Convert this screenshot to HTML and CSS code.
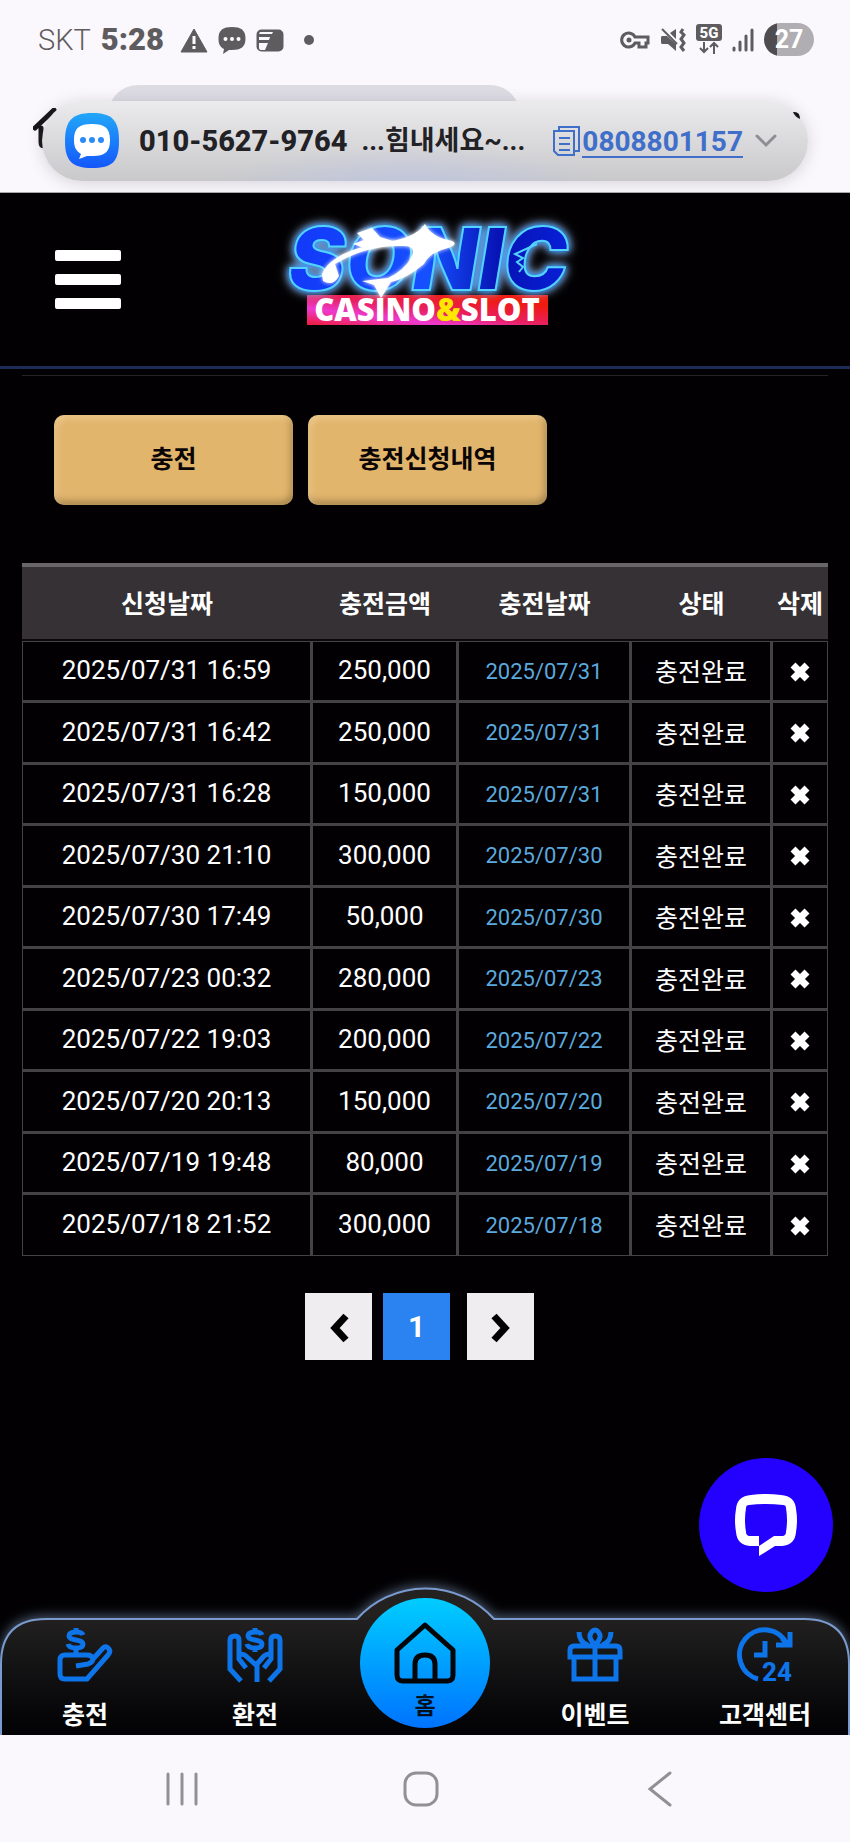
FILE: index.html
```html
<!DOCTYPE html>
<html lang="ko">
  <head>
    <meta charset="UTF-8" />
    <meta name="viewport" content="width=device-width, initial-scale=1.0" />
    <title>충전신청내역</title>
    <link rel="stylesheet" href="styles.css">
  </head>
  <body>
    <div class="phone-top">
      <div class="status-bar">
        <div class="status-left">
          <span class="carrier">SKT</span>
          <span class="clock">5:28</span>
          <svg width="28" height="28" viewBox="0 0 28 28"><path d="M14 3 L27 26 H1 Z" fill="#5f5c60" stroke="#5f5c60" stroke-linejoin="round"/><path d="M14 10v8M14 20v3" stroke="#fff" stroke-width="3"/></svg>
          <svg width="28" height="28" viewBox="0 0 28 28"><path d="M14 1C23 1 27.500 4 27.500 12.500S23 24 14 24H11L5 28L6 23C2 21 .5 18 .5 12.500C.5 4 5 1 14 1Z" fill="#5f5c60"/><g fill="#fff"><circle cx="7.500" cy="13" r="2"/><circle cx="14" cy="13" r="2"/><circle cx="20.500" cy="13" r="2"/></g></svg>
          <svg width="28" height="28" viewBox="0 0 28 28"><rect x="1.500" y="4.500" width="25" height="20" rx="4" fill="#5f5c60" stroke="#5f5c60" stroke-width="2"/><path d="M4 6H17L16 8H3ZM3 11H14L13 14H3ZM3 17H12L9 24H5Q3 24 3 22Z" fill="#faf8fc"/></svg>
          <span class="dot"></span>
        </div>
        <div class="status-right">
          <svg width="30" height="22" viewBox="0 0 30 22"><path d="M15 8A7 7 0 1 0 15 14H19V18H26V14H28V8Z" fill="none" stroke="#5f5c60" stroke-width="3"/><circle cx="9" cy="11" r="2.500" fill="#5f5c60"/></svg>
          <svg width="26" height="26" viewBox="0 0 26 26"><path d="M2 9H7L16 17V24L8 17H2Q1 17 1 15V11Q1 9 2 9ZM10 6L16 2V12Z" fill="#5f5c60"/><path d="M2 2L17 17" stroke="#5f5c60" stroke-width="2"/><path d="M23 2l-2 3 3 3-3 4 3 4-3 4 3 4" fill="none" stroke="#5f5c60" stroke-width="3"/></svg>
          <svg width="26" height="32" viewBox="0 0 26 32"><rect width="26" height="17" rx="3" fill="#5f5c60"/><text x="13" y="14" class="net-text" text-anchor="middle">5G</text><path d="M8 18V28M4 24L8 28L12 24M18 30V19M14 23L18 19L22 23" fill="none" stroke="#5f5c60" stroke-width="2"/></svg>
          <svg width="22" height="24" viewBox="0 0 22 24"><path d="M2 20V22M8 14V22M14 8V22M20 2V22" stroke="#5f5c60" stroke-width="3" stroke-linecap="round"/></svg>
          <span class="battery">27</span>
        </div>
      </div>

      <div class="notice-wrap">
        <svg class="under-icon" width="24" height="42" viewBox="0 0 24 42"><path d="M2 20L21 2M8 20V34Q8 38 11 38" fill="none" stroke="#161418" stroke-width="5" stroke-linecap="round"/></svg>
        <div class="notice-back"></div>
        <div class="notice">
          <svg width="56" height="56" viewBox="0 0 56 56">
            <defs><linearGradient id="msg" x1="0" y1="0" x2="0" y2="1"><stop offset="0" stop-color="#22a7f8"/><stop offset="1" stop-color="#1457fb"/></linearGradient></defs>
            <path d="M28 0C48 0 55 7 55 28S48 55 28 55S1 48 1 28S8 0 28 0Z" fill="url(#msg)"/>
            <path d="M28 11C41 11 46 15 46 27S41 43 29 43H23L15 46L17 41C12 38 10 34 10 27C10 15 15 11 28 11Z" fill="#fff"/>
            <g fill="#2b8af6"><circle cx="19" cy="27" r="3"/><circle cx="28" cy="27" r="3"/><circle cx="37" cy="27" r="3"/></g>
          </svg>
          <strong class="notice-from">010-5627-9764</strong>
          <span class="notice-text">...힘내세요~...</span>
          <a class="notice-link" href="tel:0808801157">
            <svg width="27" height="30" viewBox="0 0 27 30"><path d="M6 5V1H26V25H22M1 5H21V29H5L1 25ZM6 12H17M6 18H17M6 24H17" fill="none" stroke="#3f6fc9" stroke-width="2"/></svg><span>0808801157</span>
          </a>
          <svg width="22" height="14" viewBox="0 0 22 14"><path d="M2 2L11 11L20 2" fill="none" stroke="#8f8d92" stroke-width="3" stroke-linecap="round"/></svg>
        </div>
        <svg class="under-dot" width="10" height="9" viewBox="0 0 10 9"><path d="M1 1Q8 0 8 8Q3 6 1 1Z" fill="#161418"/></svg>
      </div>
    </div>

    <header class="header">
      <button class="menu-btn" type="button" aria-label="메뉴"><span></span><span></span><span></span></button>
      <a class="logo" href="#">
        <svg class="logo-svg" width="300" height="140" viewBox="0 0 300 140">
          <defs>
            <linearGradient id="bar" x1="0" y1="1" x2="1" y2="0"><stop offset="0" stop-color="#ee1c38"/><stop offset=".28" stop-color="#ee3ad0"/><stop offset=".5" stop-color="#e82060"/><stop offset=".8" stop-color="#ee1a12"/><stop offset="1" stop-color="#f01808"/></linearGradient>
            <linearGradient id="sonic" x1="0" y1="0" x2="1" y2="0"><stop offset="0" stop-color="#1238f8"/><stop offset=".5" stop-color="#1650ff"/><stop offset=".75" stop-color="#0713b4"/><stop offset="1" stop-color="#0820d8"/></linearGradient>
          </defs>
          <rect x="32" y="85" width="241" height="30" fill="url(#bar)"/>
          <text class="logo-main" x="153" y="80" text-anchor="middle">SONIC</text>
          <path class="logo-swoosh" d="M47 64Q56 42 105 33Q140 29 150 14Q156 27 177 31Q184 34 173 38Q155 42 149 54Q131 69 116 72L106 88L99 75L87 71L113 68Q130 60 137 46Q142 35 126 36Q92 35 60 54L64 66Q58 77 48 71Z"/>
          <path class="logo-swoosh" d="M82 23L97 18L105 27L124 33L92 39L78 34L89 30Z"/>
          <path d="M262 34L240 44L248 48L242 52L248 57L244 62" fill="none" stroke="#52d2ff" stroke-width="2"/>
          <text class="logo-sub" x="152" y="111" text-anchor="middle">CASINO<tspan fill="#ffe600">&amp;</tspan>SLOT</text>
        </svg>
      </a>
    </header>

    <main class="content">
      <hr class="line" />
      <div class="tabs">
        <button type="button" class="tab">충전</button>
        <button type="button" class="tab">충전신청내역</button>
      </div>

      <table class="history">
        <colgroup>
          <col class="c-req" /><col class="c-amt" /><col class="c-date" /><col class="c-state" /><col class="c-del" />
        </colgroup>
        <thead>
          <tr><th>신청날짜</th><th>충전금액</th><th>충전날짜</th><th>상태</th><th>삭제</th></tr>
        </thead>
        <tbody>
          <tr>
            <td class="num">2025/07/31 16:59</td><td class="num">250,000</td><td class="done">2025/07/31</td><td>충전완료</td>
            <td><button type="button" class="del-btn" aria-label="삭제"><svg width="20" height="20"><use href="#x" /></svg></button></td>
          </tr>
          <tr>
            <td class="num">2025/07/31 16:42</td><td class="num">250,000</td><td class="done">2025/07/31</td><td>충전완료</td>
            <td><button type="button" class="del-btn" aria-label="삭제"><svg width="20" height="20"><use href="#x" /></svg></button></td>
          </tr>
          <tr>
            <td class="num">2025/07/31 16:28</td><td class="num">150,000</td><td class="done">2025/07/31</td><td>충전완료</td>
            <td><button type="button" class="del-btn" aria-label="삭제"><svg width="20" height="20"><use href="#x" /></svg></button></td>
          </tr>
          <tr>
            <td class="num">2025/07/30 21:10</td><td class="num">300,000</td><td class="done">2025/07/30</td><td>충전완료</td>
            <td><button type="button" class="del-btn" aria-label="삭제"><svg width="20" height="20"><use href="#x" /></svg></button></td>
          </tr>
          <tr>
            <td class="num">2025/07/30 17:49</td><td class="num">50,000</td><td class="done">2025/07/30</td><td>충전완료</td>
            <td><button type="button" class="del-btn" aria-label="삭제"><svg width="20" height="20"><use href="#x" /></svg></button></td>
          </tr>
          <tr>
            <td class="num">2025/07/23 00:32</td><td class="num">280,000</td><td class="done">2025/07/23</td><td>충전완료</td>
            <td><button type="button" class="del-btn" aria-label="삭제"><svg width="20" height="20"><use href="#x" /></svg></button></td>
          </tr>
          <tr>
            <td class="num">2025/07/22 19:03</td><td class="num">200,000</td><td class="done">2025/07/22</td><td>충전완료</td>
            <td><button type="button" class="del-btn" aria-label="삭제"><svg width="20" height="20"><use href="#x" /></svg></button></td>
          </tr>
          <tr>
            <td class="num">2025/07/20 20:13</td><td class="num">150,000</td><td class="done">2025/07/20</td><td>충전완료</td>
            <td><button type="button" class="del-btn" aria-label="삭제"><svg width="20" height="20"><use href="#x" /></svg></button></td>
          </tr>
          <tr>
            <td class="num">2025/07/19 19:48</td><td class="num">80,000</td><td class="done">2025/07/19</td><td>충전완료</td>
            <td><button type="button" class="del-btn" aria-label="삭제"><svg width="20" height="20"><use href="#x" /></svg></button></td>
          </tr>
          <tr>
            <td class="num">2025/07/18 21:52</td><td class="num">300,000</td><td class="done">2025/07/18</td><td>충전완료</td>
            <td><button type="button" class="del-btn" aria-label="삭제"><svg width="20" height="20"><use href="#x" /></svg></button></td>
          </tr>
        </tbody>
      </table>

      <div class="paging">
        <button type="button" class="page-btn" aria-label="이전"><svg width="20" height="32" viewBox="0 0 20 32"><path d="M17 5L6 17L17 29" fill="none" stroke="#000" stroke-width="7"/></svg></button>
        <button type="button" class="page-btn current">1</button>
        <button type="button" class="page-btn next" aria-label="다음"><svg width="20" height="32" viewBox="0 0 20 32"><path d="M3 5L14 17L3 29" fill="none" stroke="#000" stroke-width="7"/></svg></button>
      </div>

      <button type="button" class="chat-btn" aria-label="채팅">
        <svg width="64" height="64" viewBox="0 0 64 64"><path fill-rule="evenodd" d="M17 2Q32 0 47 2Q61 3 62 16Q64 27 62 39Q61 52 48 53H41L25 63V53H16Q3 52 2 39Q0 27 2 16Q3 3 17 2ZM15 12Q12 12 12 15Q10 27 12 39Q12 42 15 43H25V53L40 43H49Q52 42 52 39Q54 27 52 15Q52 12 49 12Q32 10 15 12Z" fill="#fff"/></svg>
      </button>
    </main>

    <nav class="bottom-nav">
      <svg class="nav-bg" viewBox="0 0 850 166" preserveAspectRatio="none">
        <defs><linearGradient id="navfill" x1="0" y1="0" x2="0" y2="1"><stop offset=".15" stop-color="#242221"/><stop offset=".4" stop-color="#191819"/><stop offset=".9" stop-color="#040305"/></linearGradient></defs>
        <path class="nav-shape" d="M1 170V95Q1 50 46 50H357A92 92 0 0 1 494 50H804Q849 50 849 95V170Z" fill="url(#navfill)"/>
      </svg>
      <a href="#" class="nav-item">
        <svg width="54" height="54" viewBox="0 0 54 54"><path d="M18 38L30 36Q35 34 35 31L45 20Q48 17 51 21Q53 24 50 27L29 51H7Q2 51 2 46V32Q2 27 7 27H29Q34 27 35 31M18 20V27M25 7Q24 4 18 4Q11 4 11 8Q11 11 18 12Q25 13 25 16Q25 20 18 20Q11 20 10 16M18 0V4"/></svg>
        <span>충전</span>
      </a>
      <a href="#" class="nav-item">
        <svg width="54" height="54" viewBox="0 0 54 54"><path d="M13 53L2 41V12Q2 8 7 8Q11 8 11 12V31L18 40M11 27Q15 25 18 28L29 38V54M41 53L52 41V12Q52 8 47 8Q43 8 43 12V31L36 40M43 27Q39 25 36 28L29 36M34 7Q33 4 27 4Q20 4 20 8Q20 11 27 12Q34 13 34 16Q34 20 27 20Q20 20 19 16M27 0V4M27 20V24"/></svg>
        <span>환전</span>
      </a>
      <a href="#" class="nav-item home">
        <svg width="62" height="62" viewBox="0 0 62 62"><path d="M3 28L31 3L59 28V53Q59 59 53 59H9Q3 59 3 53ZM21 59V42Q21 33 31 33Q41 33 41 42V59"/></svg>
        <span>홈</span>
      </a>
      <a href="#" class="nav-item">
        <svg width="54" height="54" viewBox="0 0 54 54"><path d="M6 18H48Q52 18 52 22V29H2V22Q2 18 6 18ZM6 29V51H48V29M27 17V51M27 17Q21 11 22 7Q24 2 27 2Q30 2 32 7Q33 11 27 17ZM11 4Q11 14 20 17M43 4Q43 14 34 17"/></svg>
        <span>이벤트</span>
      </a>
      <a href="#" class="nav-item">
        <svg width="54" height="54" viewBox="0 0 54 54"><path d="M20 51A25 25 0 1 1 49 16M52 4V17H38M27 13V27H16M50 17L44 10"/><text x="39" y="53" text-anchor="middle" class="nav-24">24</text></svg>
        <span>고객센터</span>
      </a>
    </nav>

    <div class="system-nav">
      <button type="button" aria-label="최근 앱"><svg width="36" height="36" viewBox="0 0 36 36"><path d="M4 3V33M18 3V33M32 3V33"/></svg></button>
      <button type="button" aria-label="홈 화면"><svg width="36" height="36" viewBox="0 0 36 36"><rect x="2" y="2" width="32" height="32" rx="11"/></svg></button>
      <button type="button" aria-label="뒤로"><svg width="36" height="36" viewBox="0 0 36 36"><path d="M28 2L8 18L28 34"/></svg></button>
    </div>

    <!-- shared delete icon -->
    <svg class="sprite" width="0" height="0">
      <symbol id="x" viewBox="0 0 20 20"><path d="M3 3L17 17M17 3L3 17" stroke="#fff" stroke-width="7"/></symbol>
    </svg>
  </body>
</html>
```

FILE: styles.css
```css
* {
  box-sizing: border-box;
}
body {
  margin: 0;
  min-height: 100vh;
  display: flex;
  flex-direction: column;
  background: #020003;
  color: #fff;
  font-family: Roboto, "Noto Sans CJK KR", sans-serif;
}
button {
  border: 0;
  padding: 0;
  font-family: inherit;
  cursor: pointer;
}
a {
  color: inherit;
  text-decoration: none;
}
svg {
  flex: none;
  display: block;
}
.sprite {
  position: absolute;
}

/* phone status area */
.phone-top {
  height: 193px;
  background: #faf8fc;
  border-bottom: 1px solid #a9a7ab;
  overflow: hidden;
}
.status-bar {
  height: 77px;
  padding: 2px 36px 0 38px;
  display: flex;
  justify-content: space-between;
  align-items: center;
}
.status-left,
.status-right {
  display: flex;
  align-items: center;
  gap: 10px;
}
.carrier {
  font-size: 29px;
  font-weight: 300;
  color: #5f5c60;
}
.clock {
  font-size: 31px;
  font-weight: 900;
  color: #5f5c60;
  margin-right: 6px;
}
.dot {
  width: 10px;
  height: 10px;
  margin-left: 10px;
  border-radius: 50%;
  background: #5f5c60;
}
.net-text {
  font-size: 15px;
  font-weight: 800;
  fill: #fff;
}
.battery {
  width: 50px;
  height: 33px;
  border-radius: 17px;
  background: linear-gradient(to right, #4f4c50 26%, #b0aeb2 26%);
  font-size: 25px;
  font-weight: 700;
  line-height: 34px;
  text-align: center;
}
.notice-wrap {
  position: relative;
  padding: 24px 42px 0;
}
.under-icon {
  position: absolute;
  left: 33px;
  top: 31px;
}
.under-dot {
  position: absolute;
  right: 48px;
  top: 34px;
}
.notice-back {
  position: absolute;
  left: 108px;
  right: 330px;
  top: 8px;
  height: 60px;
  border-radius: 40px;
  background: #dddce3;
}
.notice {
  position: relative;
  height: 80px;
  padding: 0 31px 0 22px;
  display: flex;
  align-items: center;
  border-radius: 40px;
  background: radial-gradient(ellipse at 48% 110%, rgba(185, 195, 230, 0.7), rgba(185, 195, 230, 0) 35%),
    linear-gradient(#ebeaed, #c9c9cb);
  box-shadow: 0 2px 16px rgba(80, 75, 95, 0.22);
}
.notice-from {
  margin-left: 19px;
  font-size: 29px;
  font-weight: 800;
  color: #222126;
}
.notice-text {
  margin-left: 14px;
  font-size: 27px;
  font-weight: 700;
  line-height: 34px;
  color: #222126;
}
.notice-link {
  margin-left: auto;
  margin-right: 12px;
  display: flex;
  align-items: center;
  gap: 2px;
  color: #3f6fc9;
  font-size: 28px;
  font-weight: 700;
}
.notice-link span {
  padding-top: 2px;
  border-bottom: 2px solid #3f6fc9;
  line-height: 29px;
}

/* site header */
.header {
  height: 176px;
  padding: 0 55px;
  display: grid;
  grid-template-columns: 1fr auto 1fr;
  align-items: center;
  border-bottom: 3px solid #1f2c58;
}
.menu-btn {
  width: 66px;
  display: grid;
  gap: 13px;
  background: none;
}
.menu-btn span {
  height: 11px;
  border-radius: 2px;
  background: #fff;
}
.logo-svg {
  overflow: visible;
}
.logo-main {
  font-family: Inter, sans-serif;
  font-size: 86px;
  font-weight: 900;
  font-style: italic;
  fill: url(#sonic);
  stroke: #52d2ff;
  stroke-width: 2px;
  filter: drop-shadow(0 0 3px #0a84ff) drop-shadow(0 0 5px #b9d4ff);
}
.logo-swoosh {
  fill: #fff;
  filter: drop-shadow(0 0 2px #fff);
}
.logo-sub {
  font-family: "Open Sans", sans-serif;
  font-size: 31px;
  font-weight: 800;
  fill: #fff;
}

/* charge history */
.content {
  position: relative;
  flex: 1;
  padding: 6px 22px 0;
}
.line {
  margin: 0;
  border: 0;
  height: 1px;
  background: #242226;
}
.tabs {
  display: flex;
  gap: 15px;
  padding: 39px 32px 58px;
}
.tab {
  width: 239px;
  height: 90px;
  padding-bottom: 6px;
  border-radius: 10px;
  background: #e2b56d;
  box-shadow: inset 3px 3px 6px rgba(255, 235, 190, 0.4),
    inset -2px -4px 7px rgba(95, 75, 40, 0.45);
  color: #0b0506;
  font-size: 25px;
  font-weight: 700;
}
.history {
  width: 100%;
  table-layout: fixed;
  border-spacing: 0;
}
.c-req {
  width: 290px;
}
.c-amt {
  width: 146px;
}
.c-date {
  width: 173px;
}
.c-state {
  width: 141px;
}
.c-del {
  width: 56px;
}
th {
  height: 78px;
  padding: 0 0 2px;
  border-top: 4px solid #69666a;
  border-bottom: 2px solid #0b090c;
  background: #353134;
  font-size: 25px;
  font-weight: 700;
  white-space: nowrap;
}
td {
  height: 61px;
  padding: 0 0 2px;
  border: 1px solid #454245;
  border-right-width: 2px;
  border-bottom-width: 2px;
  text-align: center;
  font-size: 25px;
}
tr:nth-child(even) td {
  height: 62px;
}
td:last-child {
  border-right-width: 1px;
}
tr:last-child td {
  border-bottom-width: 1px;
}
td.num {
  font-size: 26px;
}
td.done {
  padding-bottom: 0;
  font-size: 22px;
  color: #5ba9dd;
}
.del-btn {
  display: inline-block;
  vertical-align: middle;
  background: none;
}
.paging {
  display: flex;
  justify-content: center;
  gap: 11px;
  padding: 37px 0;
  margin-right: 11px;
}
.page-btn {
  width: 67px;
  height: 67px;
  display: flex;
  align-items: center;
  justify-content: center;
  background: #efedef;
  font-size: 30px;
  font-weight: 700;
}
.page-btn.current {
  background: #2a83f0;
  color: #fff;
}
.page-btn.next {
  margin-left: 6px;
}
.chat-btn {
  position: absolute;
  right: 17px;
  bottom: 27px;
  width: 134px;
  height: 134px;
  display: flex;
  align-items: center;
  justify-content: center;
  border-radius: 50%;
  background: #2400ff;
}

/* bottom menu */
.bottom-nav {
  position: relative;
  height: 116px;
  display: grid;
  grid-template-columns: repeat(5, 1fr);
}
.nav-bg {
  position: absolute;
  left: 0;
  bottom: 0;
  width: 100%;
  height: 166px;
  pointer-events: none;
}
.nav-shape {
  stroke: #7a9bd0;
  stroke-width: 2px;
  filter: drop-shadow(0 -2px 6px rgba(150, 180, 220, 0.5));
}
.nav-item {
  position: relative;
  padding-top: 9px;
  display: flex;
  flex-direction: column;
  align-items: center;
  gap: 16px;
  font-size: 25px;
  font-weight: 700;
  line-height: 36px;
}
.nav-item svg {
  overflow: visible;
  fill: none;
  stroke: #0d74ea;
  stroke-width: 5px;
}
.nav-item .nav-24 {
  fill: #0d74ea;
  stroke: none;
  font-size: 26px;
  font-weight: 800;
}
.nav-item.home {
  justify-self: center;
  width: 130px;
  height: 130px;
  margin-top: -21px;
  padding-top: 24px;
  gap: 6px;
  border-radius: 50%;
  background: linear-gradient(#00cdff, #0073ff);
  color: #03101f;
  font-size: 23px;
  line-height: 34px;
}
.nav-item.home svg {
  stroke: #030508;
  stroke-linejoin: round;
}

/* android keys */
.system-nav {
  height: 107px;
  padding: 0 71px 0 63px;
  display: grid;
  grid-template-columns: repeat(3, 1fr);
  background: #faf8fc;
}
.system-nav button {
  display: flex;
  align-items: center;
  justify-content: center;
  background: none;
}
.system-nav svg {
  fill: none;
  stroke: #929094;
  stroke-width: 3px;
  stroke-linecap: round;
}
```
